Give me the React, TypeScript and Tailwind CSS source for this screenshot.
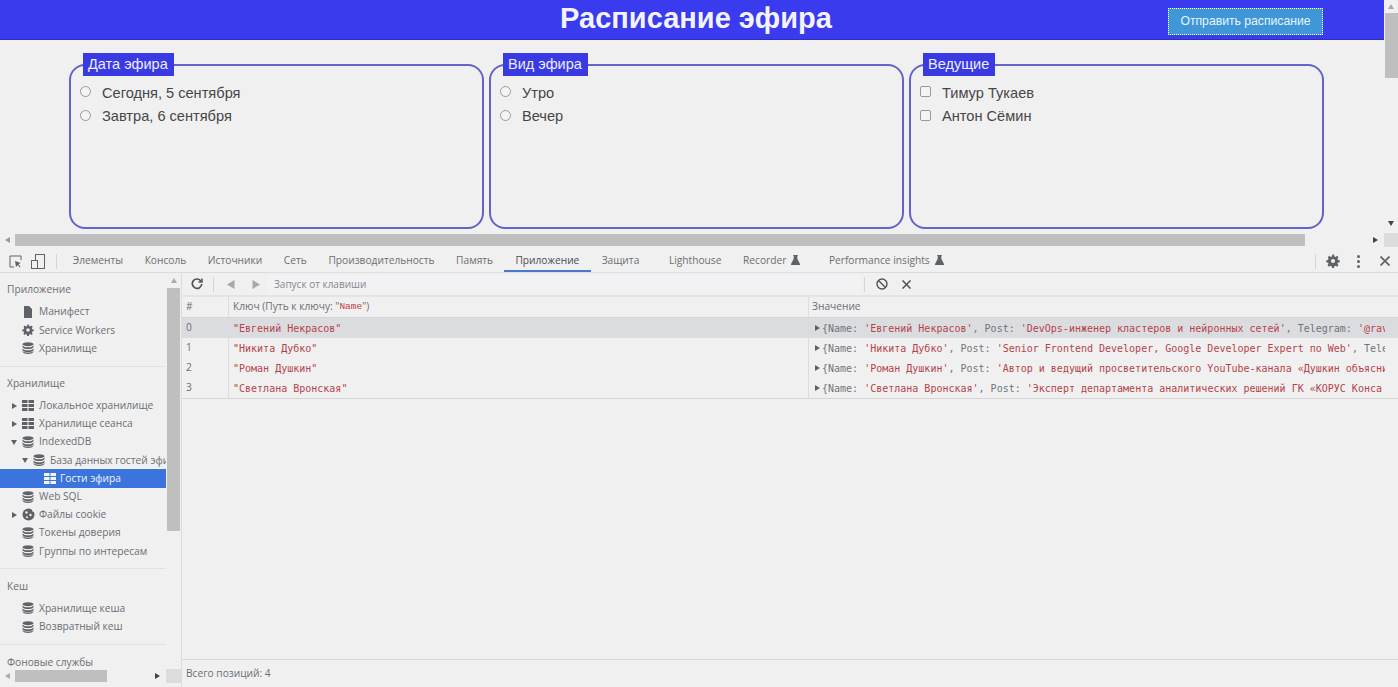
import React from "react";

const Db = () => (
  <svg width="12" height="12" viewBox="0 0 12 12" className="shrink-0" fill="#5f6368">
    <ellipse cx="6" cy="2.2" rx="5.5" ry="2" />
    <path d="M.5 3.6C1.5 5 3.5 5.3 6 5.3s4.500-.3 5.500-1.700v1.600C10.500 6.600 8.500 7 6 7S1.500 6.600.5 5.200z" />
    <path d="M.5 6.600C1.500 8 3.500 8.300 6 8.300s4.500-.3 5.500-1.700v1.600C10.500 9.600 8.500 10 6 10S1.500 9.600.5 8.200z" />
    <path d="M.5 8.900C1.500 10.200 3.500 10.500 6 10.500s4.500-.3 5.500-1.600v.9C10.500 11.300 8.500 12 6 12S1.500 11.300.5 9.800z" />
  </svg>
);
const Grid = ({ color = "#5f6368" }: { color?: string }) => (
  <svg width="12" height="11" viewBox="0 0 12 11" className="shrink-0" fill={color}>
    <rect x="0" y="0" width="5.500" height="3" />
    <rect x="6.500" y="0" width="5.500" height="3" />
    <rect x="0" y="4" width="5.500" height="3" />
    <rect x="6.500" y="4" width="5.500" height="3" />
    <rect x="0" y="8" width="5.500" height="3" />
    <rect x="6.500" y="8" width="5.500" height="3" />
  </svg>
);
const FileIcon = () => (
  <svg width="12" height="12" viewBox="0 0 12 12" className="shrink-0" fill="#5f6368">
    <path d="M2 0h5l3 3v9H2z" />
  </svg>
);
const Gear = ({ size = 12, color = "#5f6368" }: { size?: number; color?: string }) => (
  <svg width={size} height={size} viewBox="0 0 24 24" className="shrink-0" fill={color}>
    <path
      fillRule="evenodd"
      d="M13.800 1l.5 3.100c.7.200 1.400.5 2 .9l2.600-1.800 2.500 2.500-1.800 2.600c.4.600.7 1.300.9 2l3 .5v3.500l-3 .5c-.2.700-.5 1.400-.9 2l1.800 2.600-2.500 2.500-2.600-1.800c-.6.400-1.300.7-2 .9l-.5 3h-3.600l-.5-3c-.7-.2-1.400-.5-2-.9l-2.600 1.800-2.500-2.500 1.800-2.600c-.4-.6-.7-1.300-.9-2l-3-.5v-3.500l3-.5c.2-.7.5-1.400.9-2L3.100 5.700l2.500-2.500 2.600 1.800c.6-.4 1.300-.7 2-.9l.5-3.100zM12 8.500a3.500 3.500 0 100 7 3.500 3.500 0 000-7z"
    />
  </svg>
);
const Cookie = () => (
  <svg width="13" height="13" viewBox="0 0 13 13" className="shrink-0">
    <circle cx="6.500" cy="6.500" r="6" fill="#5f6368" />
    <circle cx="4.500" cy="4.500" r="1.200" fill="#f0f0f1" />
    <circle cx="8.500" cy="7" r="1.200" fill="#f0f0f1" />
    <circle cx="5" cy="9.300" r="1" fill="#f0f0f1" />
    <circle cx="12" cy="2" r="2" fill="#f0f0f1" />
  </svg>
);
const Flask = () => (
  <svg width="9" height="10" viewBox="0 0 10 11" className="shrink-0 mb-[2px]" fill="#5f6368">
    <path d="M2.500 0h5v1H7v3l3 6v1H0v-1l3-6V1h-.5z" />
  </svg>
);
const Tri = ({ dir, color = "#5f6368", size = 6 }: { dir: "r" | "d" | "l" | "u"; color?: string; size?: number }) => {
  const pts = { r: "1,0 6,3 1,6", d: "0,1 6,1 3,6", l: "5,0 0,3 5,6", u: "0,5 6,5 3,0" }[dir];
  return (
    <svg width={size} height={size} viewBox="0 0 6 6" className="shrink-0" fill={color}>
      <polygon points={pts} />
    </svg>
  );
};

const Fieldset = ({ title, items, type }: { title: string; items: string[]; type: "radio" | "checkbox" }) => (
  <fieldset className="w-[415px] h-[176px] border-2 border-[#6464c8] rounded-[16px] px-[9px] pt-[6px] min-w-0">
    <legend className="ml-[3px] pl-[5px] pr-[6px] h-[23px] leading-[22px] bg-[#3a3ae4] text-[#eceefc] text-[14.500px]">{title}</legend>
    {items.map((t) => (
      <label key={t} className="flex items-center h-[23.500px] text-[14.600px] text-[#474747]">
        <input
          type={type}
          className={
            type === "radio"
              ? "appearance-none w-[11px] h-[11px] rounded-full border border-[#999999] bg-[#f4f4f4] mb-[4px] shrink-0"
              : "appearance-none w-[11px] h-[11px] rounded-[2px] border border-[#999999] bg-[#f4f4f4] mb-[4px] shrink-0"
          }
        />
        <span className="ml-[11px]">{t}</span>
      </label>
    ))}
  </fieldset>
);

const tabs = ["Элементы", "Консоль", "Источники", "Сеть", "Производительность", "Память"];

const Row = ({ icon, label, arrow, indent = 22 }: { icon: React.ReactNode; label: string; arrow?: "r" | "d"; indent?: number }) => (
  <div className="flex items-center h-[18.200px] whitespace-nowrap" style={{ paddingLeft: indent }}>
    <span className="w-[11px] -ml-[11px] flex items-center shrink-0">{arrow && <Tri dir={arrow} />}</span>
    <span className="w-[17px] flex items-center shrink-0">{icon}</span>
    <span className="shrink-0">{label}</span>
  </div>
);

const rows = [
  ["0", "Евгений Некрасов", "DevOps-инженер кластеров и нейронных сетей", "@rav"],
  ["1", "Никита Дубко", "Senior Frontend Developer, Google Developer Expert по Web", ""],
  ["2", "Роман Душкин", "Автор и ведущий просветительского YouTube-канала «Душкин объясни", ""],
  ["3", "Светлана Вронская", "Эксперт департамента аналитических решений ГК «КОРУС Конса", ""],
];

export default function App() {
  return (
    <div className="w-[1398px] h-[687px] overflow-hidden bg-[#f0f0f1] flex flex-col font-['Liberation_Sans',sans-serif]">
      {/* page */}
      <div className="flex h-[233px] shrink-0">
        <div className="w-[1384px] shrink-0">
          <header className="h-[40px] bg-[#3a3aee] border-b border-[#3030b0] flex items-center relative">
            <h1 className="w-full text-center text-[29px] font-bold text-[#f2f3ff] leading-[36px] -mt-[3px] pl-[8px]">
              Расписание эфира
            </h1>
            <button className="absolute left-[1168px] top-[8px] w-[155px] h-[27px] bg-[#3f97d8] border border-dotted border-white text-[12.200px] text-[#eaf4fb]">
              Отправить расписание
            </button>
          </header>
          <div className="flex gap-[5px] pl-[69px] pt-[13px]">
            <Fieldset title="Дата эфира" type="radio" items={["Сегодня, 5 сентября", "Завтра, 6 сентября"]} />
            <Fieldset title="Вид эфира" type="radio" items={["Утро", "Вечер"]} />
            <Fieldset title="Ведущие" type="checkbox" items={["Тимур Тукаев", "Антон Сёмин"]} />
          </div>
        </div>
        <div className="w-[14px] flex flex-col items-center">
          <div className="h-[13px] flex items-center justify-center"><Tri dir="u" color="#aaa" /></div>
          <div className="w-[13px] h-[65px] bg-[#bfbfbf]" />
          <div className="flex-1" />
          <div className="h-[13px] mb-[4px] flex items-center justify-center"><Tri dir="d" color="#444" /></div>
        </div>
      </div>
      <div className="h-[14px] shrink-0 flex items-center">
        <div className="w-[15px] flex justify-center"><Tri dir="l" color="#999" /></div>
        <div className="w-[1290px] h-[12px] bg-[#bfbfbf]" />
        <div className="flex-1 flex justify-end pr-[6px]"><Tri dir="r" color="#444" /></div>
        <div className="w-[14px] h-[14px] bg-[#dcdcdc]" />
      </div>

      {/* tab bar */}
      <div className="mt-[3px] h-[23px] shrink-0 border-b border-[#dcdcde] flex items-center text-[#6b6f73] text-[10.200px] font-['Open_Sans',sans-serif] relative">
        <div className="w-[62px] flex items-center pl-[9px] gap-[9px] shrink-0">
          <svg width="13" height="13" viewBox="0 0 13 13" fill="none" stroke="#5f6368" className="shrink-0">
            <path d="M5 12H1V1h11v4" />
            <path d="M6 6l6 2-2.500 1 2 3-1 .5-1.500-2.500-2 2z" fill="#5f6368" stroke="none" />
          </svg>
          <svg width="14" height="15" viewBox="0 0 14 15" fill="none" stroke="#5f6368" className="shrink-0">
            <rect x="4.500" y=".5" width="9" height="14" />
            <rect x=".5" y="6.500" width="6" height="8" fill="#f0f0f1" />
          </svg>
          <div className="w-px h-[15px] bg-[#d4d4d6] ml-[2px] shrink-0" />
        </div>
        <div className="flex items-center h-full">
          {tabs.map((t) => (
            <div key={t} className="px-[10.800px] h-full flex items-center whitespace-nowrap">{t}</div>
          ))}
          <div className="px-[11.500px] h-full flex items-center whitespace-nowrap border-b-2 border-[#4b78c8] text-[#4a4e52] box-border pt-[2px]">Приложение</div>
          <div className="px-[10.800px] h-full flex items-center whitespace-nowrap">Защита</div>
          <div className="ml-[8px] px-[10.800px] h-full flex items-center whitespace-nowrap">Lighthouse</div>
          <div className="px-[10.800px] h-full flex items-center whitespace-nowrap gap-[5px]">Recorder <Flask /></div>
          <div className="ml-[7px] px-[10.800px] h-full flex items-center whitespace-nowrap gap-[5px]">Performance insights <Flask /></div>
        </div>
        <div className="absolute right-0 top-0 h-full flex items-center">
          <div className="w-px h-[15px] bg-[#d4d4d6] mr-[10px]" />
          <Gear size={14} />
          <svg width="3" height="13" viewBox="0 0 3 13" fill="#5f6368" className="ml-[17px]">
            <circle cx="1.500" cy="1.500" r="1.500" /><circle cx="1.500" cy="6.500" r="1.500" /><circle cx="1.500" cy="11.500" r="1.500" />
          </svg>
          <svg width="10" height="10" viewBox="0 0 10 10" stroke="#5f6368" strokeWidth="1.700" className="ml-[20px] mr-[8px]">
            <path d="M.5.5l9 9M9.500.5l-9 9" />
          </svg>
        </div>
      </div>

      {/* devtools body */}
      <div className="flex flex-1 min-h-0 text-[10.200px] text-[#6b6f73] font-['Open_Sans',sans-serif]">
        <aside className="w-[182px] shrink-0 border-r border-[#dcdcde] flex flex-col relative overflow-hidden">
          <div className="flex flex-1 min-h-0">
            <div className="w-[166px] shrink-0 overflow-hidden pt-[8px]">
              <div className="pl-[7px] h-[18px] flex items-center">Приложение</div>
              <div className="mt-[4px]">
                <Row icon={<FileIcon />} label="Манифест" />
                <Row icon={<Gear />} label="Service Workers" />
                <Row icon={<Db />} label="Хранилище" />
              </div>
              <div className="h-px bg-[#e2e2e4] mt-[8px] mb-[8px]" />
              <div className="pl-[7px] h-[18px] flex items-center">Хранилище</div>
              <div className="mt-[4px]">
                <Row icon={<Grid />} label="Локальное хранилище" arrow="r" />
                <Row icon={<Grid />} label="Хранилище сеанса" arrow="r" />
                <Row icon={<Db />} label="IndexedDB" arrow="d" />
                <Row icon={<Db />} label="База данных гостей эфира" arrow="d" indent={33} />
                <div className="h-[18.200px] bg-[#3b74dc] text-[#f2f5fc] flex items-center pl-[44px] gap-[4px] whitespace-nowrap">
                  <Grid color="#f2f5fc" />
                  <span>Гости эфира</span>
                </div>
                <Row icon={<Db />} label="Web SQL" />
                <Row icon={<Cookie />} label="Файлы cookie" arrow="r" />
                <Row icon={<Db />} label="Токены доверия" />
                <Row icon={<Db />} label="Группы по интересам" />
              </div>
              <div className="h-px bg-[#e2e2e4] mt-[8px] mb-[8px]" />
              <div className="pl-[7px] h-[18px] flex items-center">Кеш</div>
              <div className="mt-[4px]">
                <Row icon={<Db />} label="Хранилище кеша" />
                <Row icon={<Db />} label="Возвратный кеш" />
              </div>
              <div className="h-px bg-[#e2e2e4] mt-[8px] mb-[9px]" />
              <div className="pl-[7px] h-[18px] flex items-center whitespace-nowrap">Фоновые службы</div>
            </div>
            <div className="w-[15px] flex flex-col items-center">
              <div className="h-[15px] flex items-center justify-center"><Tri dir="u" color="#aaa" /></div>
              <div className="w-[13px] h-[243px] bg-[#bfbfbf]" />
              <div className="flex-1" />
              <div className="h-[15px] flex items-center justify-center"><Tri dir="d" color="#444" /></div>
            </div>
          </div>
          <div className="absolute left-0 bottom-[5px] w-full h-[12px] flex items-center bg-[#f0f0f1]">
            <div className="w-[15px] flex justify-center"><Tri dir="l" color="#aaa" /></div>
            <div className="w-[92px] h-[12px] bg-[#bfbfbf]" />
            <div className="w-[59px] flex justify-end pr-[6px]"><Tri dir="r" color="#444" /></div>
            <div className="w-[15px] h-[14px] bg-[#dcdcdc]" />
          </div>
        </aside>

        <main className="flex-1 min-w-0 flex flex-col">
          {/* toolbar */}
          <div className="h-[24px] shrink-0 border-b-2 border-[#e4e4e6] flex items-center">
            <svg width="12" height="12" viewBox="0 0 12 12" fill="none" stroke="#4f5357" strokeWidth="1.700" className="ml-[9px] shrink-0">
              <path d="M10 3.200A4.700 4.700 0 1010.700 6" />
              <path d="M11 .5v3.500H7.500" strokeWidth="1.500" />
            </svg>
            <div className="w-px h-[15px] bg-[#d4d4d6] ml-[10px] shrink-0" />
            <div className="ml-[13px] shrink-0"><Tri dir="l" color="#a8a8a8" size={9} /></div>
            <div className="ml-[15px] shrink-0"><Tri dir="r" color="#a8a8a8" size={9} /></div>
            <div className="ml-[7px] w-[594px] h-[18px] bg-[#f2f2f4] flex items-center pl-[7px] text-[#85888c] text-[10px] shrink-0">Запуск от клавиши</div>
            <div className="w-px h-[15px] bg-[#d4d4d6] ml-[3px] shrink-0" />
            <svg width="12" height="12" viewBox="0 0 12 12" fill="none" stroke="#4f5357" strokeWidth="1.400" className="ml-[11px] shrink-0">
              <circle cx="6" cy="6" r="5" /><path d="M2.500 2.500l7 7" />
            </svg>
            <svg width="9" height="9" viewBox="0 0 10 10" stroke="#4f5357" strokeWidth="1.700" className="ml-[14px] shrink-0">
              <path d="M.5.5l9 9M9.500.5l-9 9" />
            </svg>
          </div>
          {/* table */}
          <div className="grid grid-cols-[47px_580px_1fr] h-[21px] items-center border-b border-[#d4d4d6] shrink-0">
            <div className="pl-[4px] h-full flex items-center border-r border-[#dcdcde]">#</div>
            <div className="pl-[4px] h-full flex items-center border-r border-[#dcdcde] whitespace-pre">
              Ключ (Путь к ключу: "<span className="text-[#c04040] font-['Liberation_Mono',monospace] text-[9.500px]">Name</span>")
            </div>
            <div className="pl-[3px]">Значение</div>
          </div>
          {rows.map((r, i) => (
            <div
              key={r[0]}
              className={
                i === 0
                  ? "grid grid-cols-[47px_580px_1fr] h-[20px] items-center bg-[#dbdcdf] font-['DejaVu_Sans_Mono',monospace] text-[10px] overflow-hidden"
                  : "grid grid-cols-[47px_580px_1fr] h-[20px] items-center font-['DejaVu_Sans_Mono',monospace] text-[10px] overflow-hidden"
              }
            >
              <div className="pl-[4px] h-full flex items-center border-r border-[#dcdcde] font-['Open_Sans',sans-serif] text-[10.200px]">{r[0]}</div>
              <div className="pl-[4px] h-full flex items-center border-r border-[#dcdcde] text-[#b5444a]">"{r[1]}"</div>
              <div className="pl-[5px] pr-[13px] h-full flex items-center whitespace-nowrap min-w-0 text-[#70757a]">
                <Tri dir="r" />
                <span className="ml-[2px] overflow-hidden">
                  {"{Name: "}
                  <span className="text-[#b5444a]">'{r[1]}'</span>
                  {", Post: "}
                  <span className="text-[#b5444a]">'{r[2]}{i < 2 ? "'" : ""}</span>
                  {i === 0 && ", Telegram: "}
                  {i === 0 && <span className="text-[#b5444a]">'{r[3]}</span>}
                  {i === 1 && ", Tele"}
                </span>
              </div>
            </div>
          ))}
          <div className="h-px bg-[#d4d4d6] shrink-0" />
          <div className="flex-1" />
          <div className="h-[28px] shrink-0 border-t border-[#d8d8da] flex items-center pl-[4px]">Всего позиций: 4</div>
        </main>
      </div>
    </div>
  );
}
